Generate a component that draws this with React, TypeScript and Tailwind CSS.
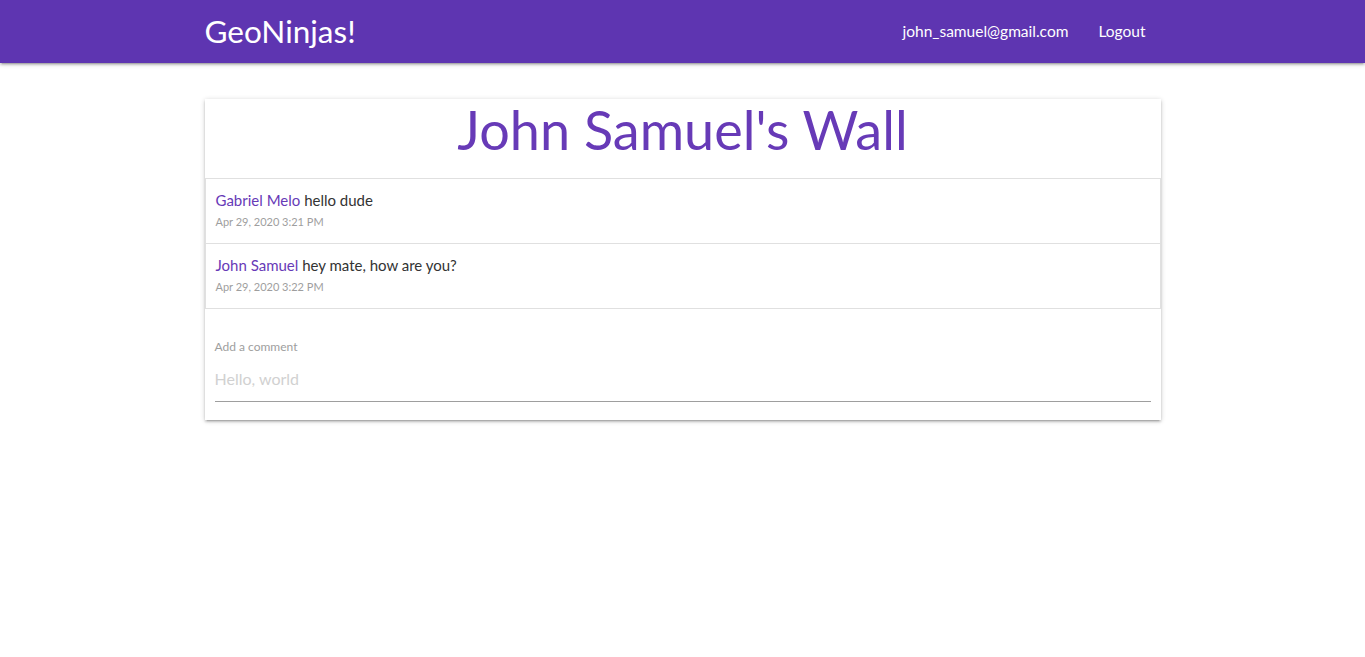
import React from 'react';

const comments = [
  { id: 1, author: 'Gabriel Melo', text: 'hello dude', date: 'Apr 29, 2020 3:21 PM' },
  { id: 2, author: 'John Samuel', text: 'hey mate, how are you?', date: 'Apr 29, 2020 3:22 PM' },
];

const App = () => {
  return (
    <div className="min-h-screen bg-white font-['Lato','Noto_Sans',sans-serif]">
      {/* Navbar */}
      <nav className="h-[63px] bg-[#5e35b1] shadow-[0_2px_2px_0_rgba(0,0,0,0.14),0_3px_1px_-2px_rgba(0,0,0,0.12),0_1px_5px_0_rgba(0,0,0,0.2)]">
        <div className="mx-auto flex h-full w-[956px] items-center justify-between">
          <span className="text-[31.5px] leading-none text-white">GeoNinjas!</span>
          <ul className="flex items-center text-[15.5px] text-white">
            <li className="px-[15px]">john_samuel@gmail.com</li>
            <li className="px-[15px]">Logout</li>
          </ul>
        </div>
      </nav>

      <main className="mx-auto mt-[36px] w-[956px]">
        <div className="bg-white shadow-[0_2px_2px_0_rgba(0,0,0,0.14),0_3px_1px_-2px_rgba(0,0,0,0.12),0_1px_5px_0_rgba(0,0,0,0.2)]">
          <div className="flex h-[79px] justify-center">
            <h1 className="text-[54px] leading-[62px] text-[#673ab7]">John Samuel's Wall</h1>
          </div>

          <ul className="border border-[#e0e0e0]">
            {comments.map((c, i) => (
              <li key={c.id} className={`px-[10px] pt-[10px] ${i > 0 ? 'h-[65px] border-t border-[#e0e0e0]' : 'h-[64px]'}`}>
                <p className="text-[15px] leading-[22px] text-[#333]">
                  <span className="text-[#673ab7]">{c.author}</span> {c.text}
                </p>
                <p className="mt-[3px] text-[11px] leading-[16px] text-[#9e9e9e]">{c.date}</p>
              </li>
            ))}
          </ul>

          <div className="px-[10px] pt-[30px] pb-[18px]">
            <label className="block text-[12px] leading-[16px] text-[#9e9e9e]">Add a comment</label>
            <input
              type="text"
              placeholder="Hello, world"
              className="mt-[10px] h-[37px] w-full border-b border-[#9e9e9e] bg-transparent pb-[10px] text-[16px] text-[#333] outline-none placeholder:text-[#d1d1d1]"
            />
          </div>
        </div>
      </main>
    </div>
  );
};

export default App;
